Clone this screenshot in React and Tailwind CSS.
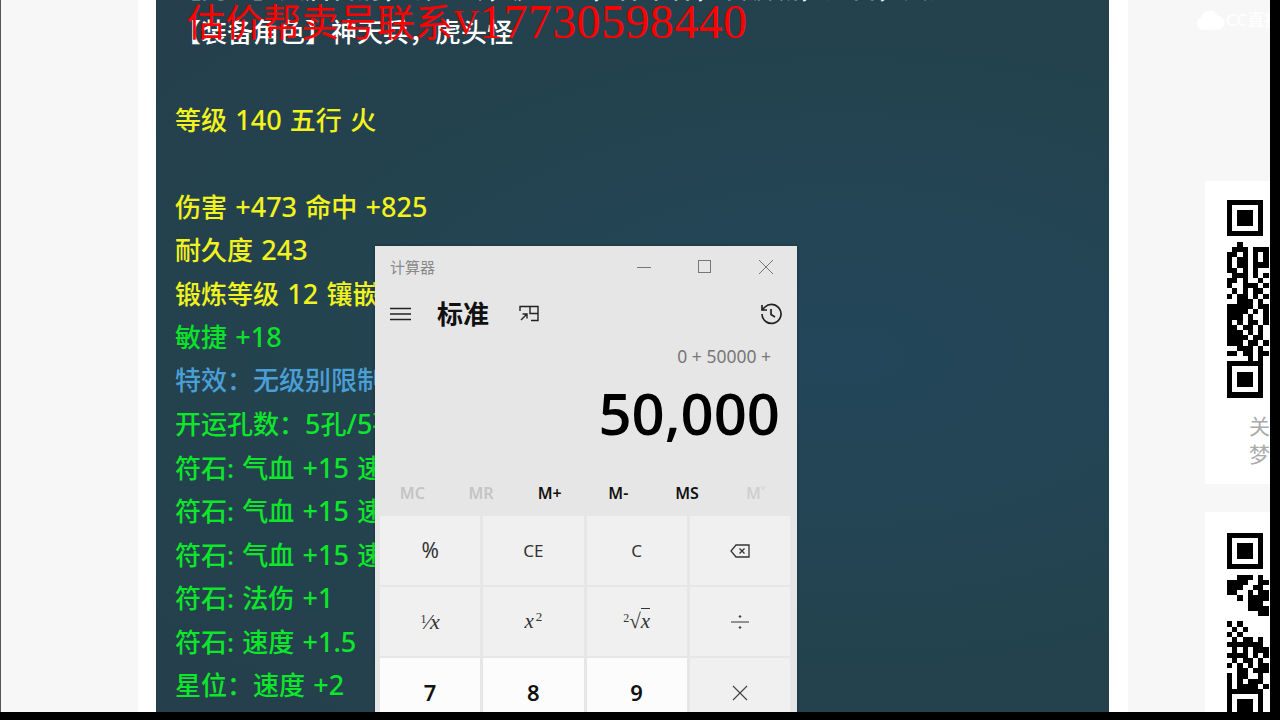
const qr1 = [
"..#.....",".###.###","##.#.#.#","#.##.#.#","#.##.###","##.#.#..",".###.#.#","##.#..#.","#..###.#",".#.#.##.","#.##.#.#","..###.#.","#####.##","####.#.#","###.#..#","#.#.##.#","##.##.#.","###.#.#.","####.##.","###.##.#","..###.#.","##.##.##","....#.#."];
const qr2 = [
"..###.#.","####..##","###..##.","##..#.##","..#.####","....###.","....####","......##","........","#.#.....",".#.#....","#.#.....",".#.##.#.","#######.",".#.#.###","####.#.#",".#.##.#.","#.#.#.##","..##.###","#.##..#.","#.#.###.","#.####.#"];

function Finder({ x, y }) {
  return (
    <g>
      <path fillRule="evenodd" d={`M${x} ${y}h36.4v36.4h-36.4z M${x + 5.2} ${y + 5.2}v26h26v-26z`} />
      <rect x={x + 10.4} y={y + 10.4} width="15.6" height="15.6" />
    </g>
  );
}

function QR({ rows, bottom }) {
  return (
    <svg width="48" height={bottom * 5.2 + 37} className="block shrink-0" fill="#000" shapeRendering="crispEdges">
      <Finder x={0} y={0} />
      <Finder x={0} y={bottom * 5.2} />
      {rows.map((r, i) =>
        r.split("").map((c, j) =>
          c === "#" ? <rect key={`${i}-${j}`} x={j * 5.2} y={(i + 8) * 5.2} width="5.2" height="5.2" /> : null
        )
      )}
    </svg>
  );
}

const lines = [
  ["【门派】大唐官府，狮驼岭，魔王寨，神木林，凌波城，龙宫，女魃。", "text-white"],
  ["【装备角色】神天兵，虎头怪", "text-white"],
  ["", ""],
  ["等级 140 五行 火", "text-[#f2f21c]"],
  ["", ""],
  ["伤害 +473 命中 +825", "text-[#f2f21c]"],
  ["耐久度 243", "text-[#f2f21c]"],
  ["锻炼等级 12 镶嵌宝石 太阳石", "text-[#f2f21c]"],
  ["敏捷 +18", "text-[#0de02a]"],
  ["特效：无级别限制", "text-[#4a9fd6]"],
  ["开运孔数：5孔/5孔", "text-[#0de62a]"],
  ["符石: 气血 +15 速度 +1.5", "text-[#0de62a]"],
  ["符石: 气血 +15 速度 +1.5", "text-[#0de62a]"],
  ["符石: 气血 +15 速度 +1.5", "text-[#0de62a]"],
  ["符石: 法伤 +1", "text-[#0de62a]"],
  ["符石: 速度 +1.5", "text-[#0de62a]"],
  ["星位：速度 +2", "text-[#0de62a]"],
];

const mem = [
  ["MC", "text-[#c4c4c4]"],
  ["MR", "text-[#c4c4c4]"],
  ["M+", "text-[#111]"],
  ["M-", "text-[#111]"],
  ["MS", "text-[#111]"],
  ["M˅", "text-[#cfcfcf]"],
];

function Line({ text }) {
  return text.split(/([+\d./]+)/).map((p, i) =>
    i % 2 ? <span key={i} className="text-[27px]">{p}</span> : <span key={i}>{p}</span>
  );
}

function Key({ children, digit }) {
  return (
    <div className={`h-[69px] flex items-center justify-center ${digit ? "bg-[#fcfcfc] text-[#111] font-semibold text-[22px]" : "bg-[#f0f0f0] text-[#333] text-[17px]"}`}>
      {children}
    </div>
  );
}

function Calculator() {
  return (
    <div className="absolute left-[375px] top-[246px] w-[422px] h-[480px] bg-[#e6e6e6] flex flex-col font-['Noto_Sans','Noto_Sans_CJK_SC',sans-serif] shadow-[0_0_3px_rgba(0,0,0,0.3)]">
      <div className="h-[42px] flex items-center justify-between pl-[15px] pr-[23px] shrink-0">
        <span className="text-[15px] text-[#8a8a8a]">计算器</span>
        <div className="flex items-center gap-[45px]">
          <svg width="16" height="16" stroke="#777" fill="none"><path d="M1 8.5h14" /></svg>
          <svg width="16" height="16" stroke="#777" fill="none"><rect x="1.5" y="1.5" width="12" height="12" /></svg>
          <svg width="16" height="16" stroke="#777" fill="none"><path d="M1 1l14 14M15 1L1 15" /></svg>
        </div>
      </div>
      <div className="h-[52px] flex items-center pl-[15px] pr-[14px] shrink-0">
        <svg width="22" height="14" stroke="#222" strokeWidth="1.5" fill="none"><path d="M0 1.5h21M0 7h21M0 12.5h21" /></svg>
        <span className="ml-[25px] text-[26px] font-bold text-[#111] leading-none">标准</span>
        <svg width="21" height="18" viewBox="0 0 21 18" stroke="#222" strokeWidth="1.4" fill="none" className="ml-[30px]">
          <path d="M1 6V1.5h18v14h-7M11 1.5v7h8" />
          <path d="M2 15l6-6M3.5 9H8v4.5" />
        </svg>
        <svg width="24" height="24" viewBox="0 0 24 24" stroke="#222" strokeWidth="1.7" fill="none" className="ml-auto">
          <path d="M3 12a9.5 9.5 0 1 0 3-7L3 8" />
          <path d="M3 3v5h5" />
          <path d="M12 7v5.5l4 2.5" />
        </svg>
      </div>
      <div className="h-[32px] flex items-center justify-end pr-[26px] text-[17.5px] text-[#777] shrink-0">0 + 50000 +</div>
      <div className="h-[82px] flex items-center justify-end pr-[17px] text-[58px] font-semibold text-black leading-none shrink-0 font-['Open_Sans',sans-serif]">50,000</div>
      <div className="h-[46px] mt-[16px] grid grid-cols-6 items-center pl-[3px] pr-[7px] text-[16px] font-semibold text-center shrink-0">
        {mem.map(([t, c]) => <span key={t} className={c}>{t}</span>)}
      </div>
      <div className="grid grid-cols-4 gap-x-[3px] gap-y-[2px] pl-[5px] pr-[7px] font-['Noto_Sans',sans-serif]">
        <Key><span className="text-[21px]">%</span></Key>
        <Key>CE</Key>
        <Key>C</Key>
        <Key>
          <svg width="20" height="14" viewBox="0 0 20 14" stroke="#333" strokeWidth="1.3" fill="none">
            <path d="M6 1h13v12H6L1 7z" />
            <path d="M9.5 4.5l5 5M14.5 4.5l-5 5" />
          </svg>
        </Key>
        <Key><span className="font-['Liberation_Serif',serif] text-[22px]"><sup className="text-[12px]">1</sup>⁄<i>x</i></span></Key>
        <Key><span className="font-['Liberation_Serif',serif] text-[21px]"><i>x</i><sup className="text-[13px] ml-[2px]">2</sup></span></Key>
        <Key><span className="font-['Liberation_Serif',serif] text-[21px]"><sup className="text-[12px]">2</sup>√<i className="border-t border-[#333] leading-none">x</i></span></Key>
        <Key>
          <svg width="18" height="18" stroke="#333" fill="#333"><path d="M0 9h18" /><circle cx="9" cy="3.5" r="0.8" /><circle cx="9" cy="14.5" r="0.8" /></svg>
        </Key>
        <Key digit>7</Key>
        <Key digit>8</Key>
        <Key digit>9</Key>
        <Key>
          <svg width="16" height="16" stroke="#444" strokeWidth="1.2"><path d="M1 1l14 14M15 1L1 15" /></svg>
        </Key>
      </div>
    </div>
  );
}

export default function App() {
  return (
    <div className="relative w-[1280px] h-[720px] bg-black overflow-hidden font-['Noto_Sans','Noto_Sans_CJK_SC',sans-serif]">
      <div className="relative w-[1270px] h-[712px] overflow-hidden flex bg-[#f7f7f7]">
        <div className="w-[138px] shrink-0 border-l border-[#555] bg-[#f7f7f7]" />
        <div className="w-[18px] shrink-0 bg-white" />
        <div className="w-[953px] shrink-0 overflow-hidden bg-[radial-gradient(ellipse_at_72%_50%,#23465a_0%,#23434f_55%,#253f4b_100%)] pl-[19px]">
          <div className="-mt-[33px] text-[26px] leading-[43.5px] font-medium whitespace-nowrap [word-spacing:1.5px]">
            {lines.map(([t, c], i) => (
              <div key={i} className={`h-[43.5px] ${c}`}><Line text={t} /></div>
            ))}
          </div>
        </div>
        <div className="w-[19px] shrink-0 bg-white" />
        <div className="flex-1 pl-[77px] pt-[181px] flex flex-col gap-[28px] min-w-0">
          <div className="h-[303px] bg-white pl-[22px] pt-[19px] overflow-hidden shrink-0">
            <QR rows={qr1} bottom={31} />
            <div className="mt-[14px] pl-[22px] text-[21px] leading-[28px] text-[#aaa] whitespace-nowrap">
              <div>关注</div>
              <div>梦幻</div>
            </div>
          </div>
          <div className="h-[240px] bg-white pl-[22px] pt-[21px] overflow-hidden shrink-0">
            <QR rows={qr2} bottom={30} />
          </div>
        </div>
        <Calculator />
        <div className="absolute left-[187px] top-[-5px] flex items-center h-[50px] text-[#f00] whitespace-nowrap">
          <span className="text-[38px] font-['Noto_Sans_CJK_SC',sans-serif] leading-none">估价帮卖号联系</span>
          <span className="text-[36px] font-['Liberation_Serif',serif] leading-none mt-[6px]">V</span>
          <span className="text-[48px] font-['Liberation_Serif',serif] leading-none tracking-[0.4px] mt-[4px]">17730598440</span>
        </div>
        <div className="absolute left-[1195px] top-[7px] flex items-center gap-[1px] text-white/90 whitespace-nowrap">
          <svg width="30" height="24" viewBox="0 0 26 22" fill="#fff"><path d="M6 20a6 6 0 0 1-1-11.5A8 8 0 0 1 20 7a6.5 6.5 0 0 1 0 13z" /></svg>
          <span className="text-[17px] font-medium">CC直播</span>
        </div>
      </div>
    </div>
  );
}
